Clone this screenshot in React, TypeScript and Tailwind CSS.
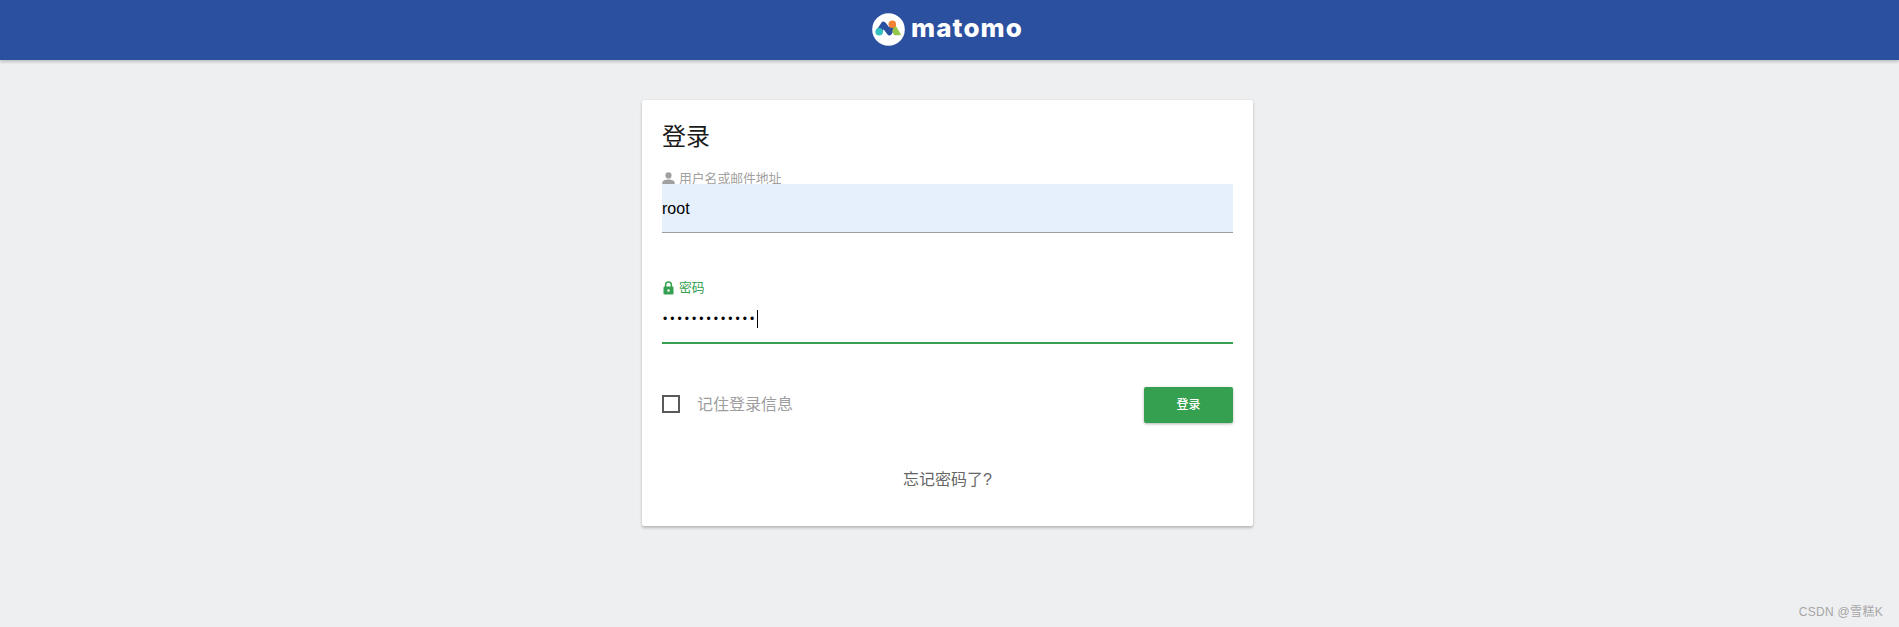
const cjk = "font-['Liberation_Sans','Noto_Sans_CJK_SC',sans-serif]";

function Logo() {
  return (
    <svg width="33" height="33" viewBox="0 0 33 33" className="block">
      <circle cx="16.5" cy="16.5" r="16.3" fill="#ffffff" />
      <path d="M7 18.5 L11.5 11.5 L17.5 19.5 L21 13" fill="none" stroke="#2b4f9f" strokeWidth="5.5" strokeLinecap="round" strokeLinejoin="round" />
      <path d="M23 13 L28 21.5 L22.5 21.5 L21 18 Z" fill="#95c748" stroke="#95c748" strokeWidth="1.5" strokeLinejoin="round" />
      <circle cx="7.2" cy="18.8" r="3.8" fill="#35bfc0" />
      <circle cx="20.3" cy="11.3" r="3.8" fill="#f38334" />
    </svg>
  );
}

export default function App() {
  return (
    <div className={`${cjk} min-h-[627px] bg-[#eeeff1] flex flex-col relative overflow-hidden`}>
      <header className="h-[60px] bg-[#2b50a0] shadow-[0_2px_3px_rgba(0,0,0,0.2)] flex items-center justify-center gap-[6px] pb-[2px] pr-1 shrink-0">
        <Logo />
        <span className="text-white font-['Inter',sans-serif] font-extrabold text-[26px] leading-none tracking-[1.1px] pb-[3px]">matomo</span>
      </header>
      <main className="flex justify-center pt-10 pr-1">
        <section className="w-[611px] h-[426px] bg-white rounded-[2px] shadow-[0_2px_3px_rgba(0,0,0,0.22),0_0_2px_rgba(0,0,0,0.08)] px-5 pt-[20px]">
          <h1 className="text-[24px] leading-[34px] text-[#1a1a1a] font-normal">登录</h1>
          <div className="mt-[15px] h-[15px] flex items-start gap-[4px] text-[12.8px] leading-[19px] text-[#a0a0a0]">
            <svg width="13" height="13" viewBox="0 0 13 13" className="shrink-0 mt-[3px]">
              <circle cx="6.5" cy="3.4" r="3.1" fill="#a0a0a0" />
              <path d="M0.3 12.5 V10.5 C0.3 8.5 3.5 7.4 6.5 7.4 C9.5 7.4 12.7 8.5 12.7 10.5 V12.5 Z" fill="#a0a0a0" />
            </svg>
            <span>用户名或邮件地址</span>
          </div>
          <div className="relative h-[49px] bg-[#e6f0fc] border-b border-[#9a9ea3] flex items-center pt-[1px] text-[16px] text-black">root</div>
          <div className="mt-[47px] flex items-center gap-[4px] text-[12.8px] leading-[15px] text-[#35a04f]">
            <svg width="13" height="14" viewBox="0 0 13 14" className="shrink-0">
              <path d="M3.6 6 V4 a2.9 2.9 0 0 1 5.8 0 V6" fill="none" stroke="#35a04f" strokeWidth="1.5" />
              <rect x="1.5" y="5.5" width="10" height="8" rx="1.3" fill="#35a04f" />
              <circle cx="6.5" cy="9.5" r="1.2" fill="#ffffff" />
            </svg>
            <span>密码</span>
          </div>
          <div className="mt-[2px] h-[47px] border-b-2 border-[#35a04f] flex items-center text-[12px] text-black pb-[1px]">
            <span className="tracking-[3.05px] pl-[1px]">•••••••••••••</span>
            <span className="w-px h-[18px] bg-black" />
          </div>
          <div className="mt-[43px] h-9 flex items-center justify-between">
            <label className="flex items-center gap-[17px] text-[16px] text-[#9e9e9e]">
              <span className="w-[18px] h-[18px] border-2 border-[#5a5a5a] mb-[2px]" />
              <span>记住登录信息</span>
            </label>
            <button className="w-[89px] h-9 rounded-[2px] bg-[#35a04f] text-white text-[12px] font-medium shadow-[0_1px_3px_rgba(0,0,0,0.3)]">登录</button>
          </div>
          <p className="mt-[45px] text-center text-[16px] leading-[24px] text-[#666666]">忘记密码了?</p>
        </section>
      </main>
      <div className="absolute right-[16px] bottom-[8px] text-[12px] leading-[14px] tracking-[0.3px] text-[#a6a6a6]">CSDN @雪糕K</div>
    </div>
  );
}
